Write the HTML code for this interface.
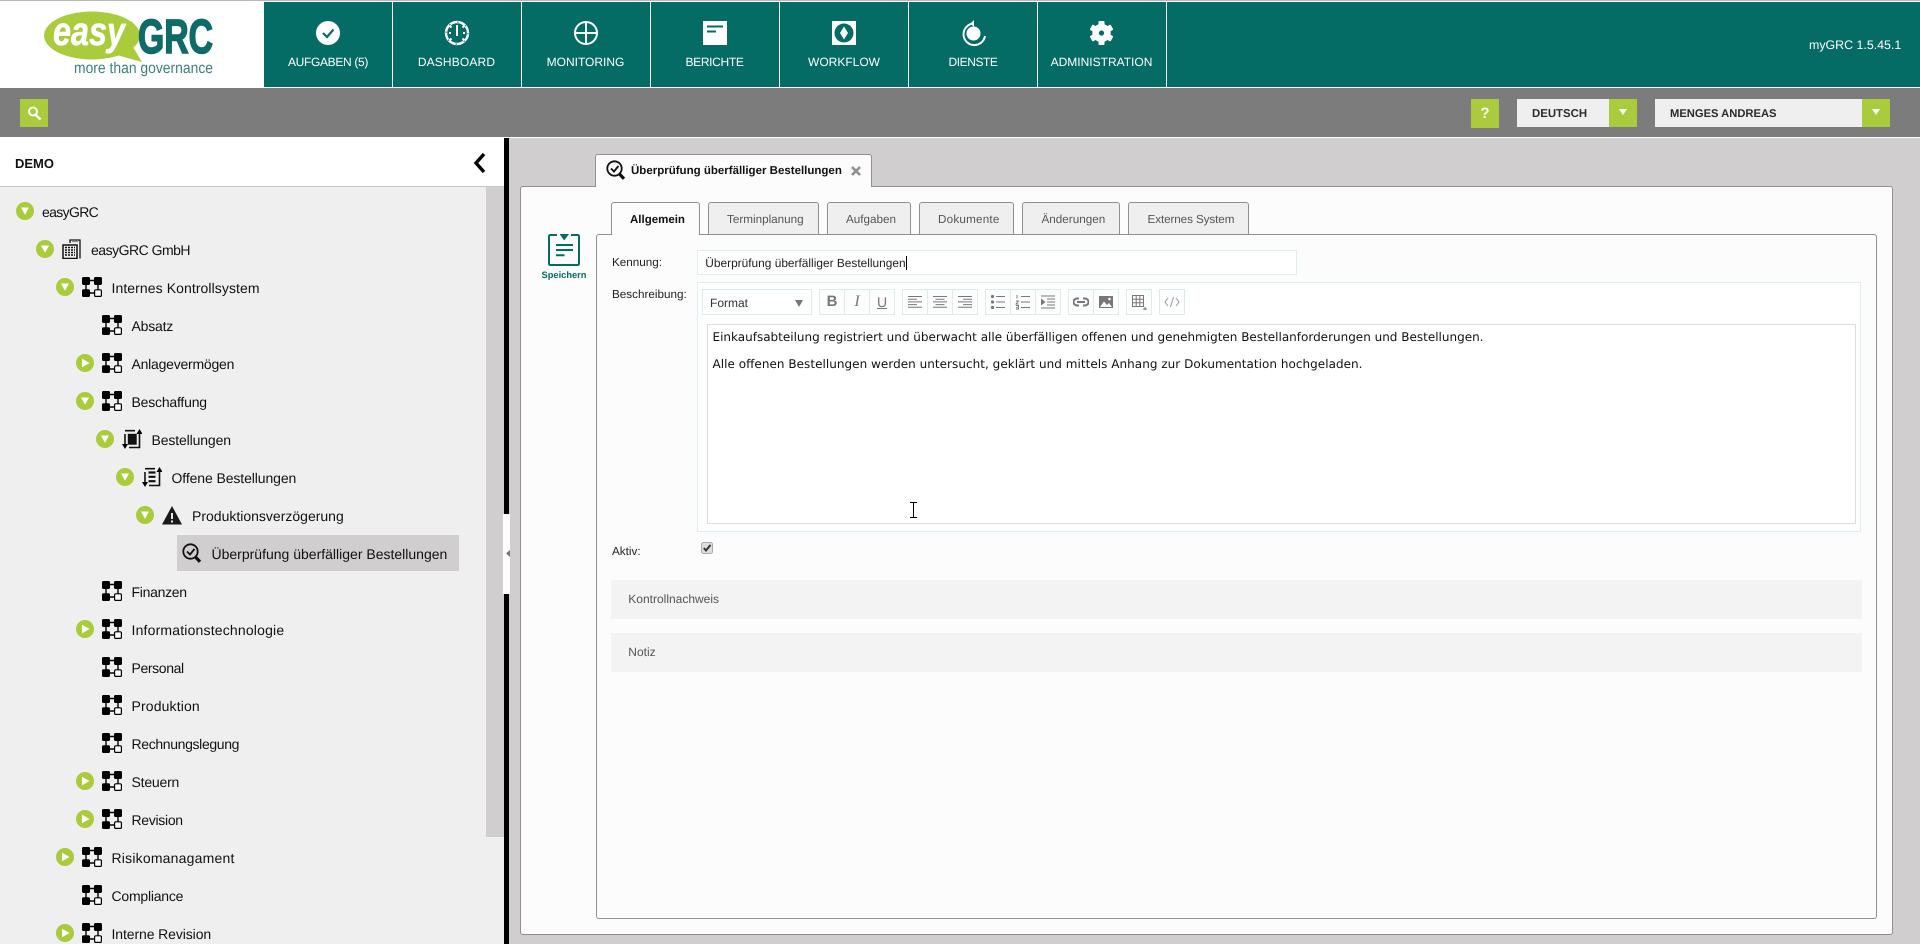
<!DOCTYPE html>
<html lang="de"><head><meta charset="utf-8"><title>myGRC</title>
<style>
html,body{margin:0;padding:0;width:1920px;height:944px;overflow:hidden;background:#d0cecf}
body{position:relative;font-family:"Liberation Sans",Arial,sans-serif;color:#111;text-rendering:geometricPrecision}
.a{position:absolute}
.t{position:absolute;white-space:nowrap;line-height:20px;height:20px}
.nav{position:absolute;top:2px;height:85px;background:#056b65}
.nt{position:absolute;top:52px;width:129px;text-align:center;color:#fff;font-size:12px;line-height:20px;white-space:nowrap}
.tree{font-size:14px;color:#111}
.tab{position:absolute;top:202px;height:32px;box-sizing:border-box;background:#efefef;border:1px solid #909090;border-bottom:0;border-radius:3px 3px 0 0}
.tt{font-size:11.7px;color:#555}
.btn{position:absolute;top:289px;width:26px;height:26px;box-sizing:border-box;border:1px solid #dcebeb;background:#fdfdfd;color:#777;text-align:center;font-size:13px;line-height:24px}
.btn svg{position:absolute;left:4px;top:4px;width:16px;height:16px}
.ic{position:absolute;width:20px;height:20px}
.tg{position:absolute;width:18px;height:18px}
svg{display:block}
</style></head><body>
<svg width="0" height="0" style="position:absolute">
<defs>
<symbol id="proc" viewBox="0 0 20 20"><path d="M4 3.500H16M4 6V14M16 6V14M6 16H13" stroke="#000" stroke-width="1.400" fill="none"/><rect x="0" y="0" width="8" height="8" rx="1.600"/><rect x="12" y="0" width="8" height="8" rx="1.600"/><rect x="0" y="12.200" width="8" height="7.800" rx="1.600"/><rect x="12.600" y="12.800" width="6.800" height="6.600" rx="1.200" fill="#fff" stroke="#000" stroke-width="1.200"/></symbol>
<symbol id="bld" viewBox="0 0 20 20"><path d="M8 4V1H18V19.500" fill="none" stroke="#111" stroke-width="1.300"/><rect x="1" y="6" width="14" height="13.500" fill="#efefef" stroke="#111" stroke-width="1.500"/><path d="M3 8.500H13M3 11H13M3 13.500H13M3 16H13" stroke="#111" stroke-width="1.500" stroke-dasharray="2 1"/><path d="M10.500 2.600H16" stroke="#111" stroke-dasharray="1 1"/></symbol>
<symbol id="best" viewBox="0 0 20 20"><path d="M3 5V18M17.500 2V18.500H7M3 1.700H13" fill="none" stroke="#111" stroke-width="1.600"/><path d="M0 15H6L3 20ZM14.500 5H20.500L17.500 0Z"/><rect x="6.500" y="5.500" width="7.500" height="9.500" stroke="#111" fill="#111" stroke-width="1.400"/></symbol>
<symbol id="best2" viewBox="0 0 20 20"><path d="M3 5V18M17.500 2V18.500H7M3 1.700H13" fill="none" stroke="#111" stroke-width="1.600"/><path d="M0 15H6L3 20ZM14.500 5H20.500L17.500 0Z"/><path d="M6.500 5.500H13.500M6.500 9.800H13.500M6.500 14.200H13.500" stroke="#111" stroke-width="2.200"/></symbol>
<symbol id="mag" viewBox="0 0 20 20"><circle cx="8.500" cy="8.500" r="7.200" fill="none" stroke="#111" stroke-width="1.800"/><path d="M5 8.500L8 11.500L12.500 6" fill="none" stroke="#111" stroke-width="1.800"/><path d="M13.500 14L18 18.800" stroke="#111" stroke-width="3.200"/></symbol>
<symbol id="dn" viewBox="0 0 18 18"><circle cx="9" cy="9" r="9" fill="#a9cb3c"/><path d="M5 5.500H13L9 12.800Z" fill="#fff"/></symbol>
<symbol id="rt" viewBox="0 0 18 18"><circle cx="9" cy="9" r="9" fill="#a9cb3c"/><path d="M6 4.800L13.600 9L6 13.200Z" fill="#fff"/></symbol>
</defs></svg>

<!-- header -->
<div class="a" style="left:0;top:0;width:1920px;height:1px;background:#b9b9b9"></div>
<div class="a" style="left:0;top:1px;width:1920px;height:1px;background:#fff"></div>
<div class="a" style="left:0;top:2px;width:264px;height:86px;background:#fff"></div>
<svg class="a" style="left:0;top:0" width="264" height="88" viewBox="0 0 264 88">
<ellipse cx="92" cy="35.500" rx="48" ry="24" fill="#a9cb3c"/><path d="M106 52L142 62L130 42Z" fill="#a9cb3c"/>
<text x="53" y="45" font-family="Liberation Sans" font-weight="700" font-style="italic" font-size="40" fill="#fff" stroke="#fff" stroke-width=".6" textLength="72" lengthAdjust="spacingAndGlyphs">easy</text>
<text x="138" y="53" font-family="Liberation Sans" font-weight="700" font-size="48" fill="#0f6b68" stroke="#0f6b68" stroke-width="1.600" textLength="75" lengthAdjust="spacingAndGlyphs">GRC</text>
<text x="74" y="73" font-family="Liberation Sans" font-size="15.500" fill="#3f7f80" textLength="139" lengthAdjust="spacingAndGlyphs">more than governance</text>
</svg>
<div class="nav" style="left:264px;width:1656px"></div>
<div class="a" style="left:264px;top:87px;width:1656px;height:1px;background:#fff"></div>
<div class="a" style="left:392px;top:2px;width:1px;height:85px;background:#fff"></div>
<div class="a" style="left:521px;top:2px;width:1px;height:85px;background:#fff"></div>
<div class="a" style="left:650px;top:2px;width:1px;height:85px;background:#fff"></div>
<div class="a" style="left:779px;top:2px;width:1px;height:85px;background:#fff"></div>
<div class="a" style="left:908px;top:2px;width:1px;height:85px;background:#fff"></div>
<div class="a" style="left:1037px;top:2px;width:1px;height:85px;background:#fff"></div>
<div class="a" style="left:1166px;top:2px;width:1px;height:85px;background:#fff"></div>
<svg class="a" style="left:264px;top:0" width="920" height="88" viewBox="264 0 920 88">
<circle cx="328" cy="33" r="12" fill="#fff"/><path d="M323 33L327 37L333.500 29.500" fill="none" stroke="#056b65" stroke-width="2.200"/>
<circle cx="457" cy="33" r="11" fill="none" stroke="#fff" stroke-width="2.400"/><circle cx="457" cy="33" r="11" fill="none" stroke="#056b65" stroke-width="1" stroke-dasharray="1.500 7.100"/><path d="M457 25V36M451 33H449M463 33H465M451.500 27.500L450 26M462.500 27.500L464 26M451.500 38.500L450 40M462.500 38.500L464 40" stroke="#fff" stroke-width="2"/>
<circle cx="586" cy="33" r="11" fill="none" stroke="#fff" stroke-width="2"/><path d="M586 22V44M575 33H597" stroke="#fff" stroke-width="2"/>
<rect x="703" y="21" width="24" height="24" fill="#fff"/><path d="M707 26.500H723M707 31.500H716" stroke="#056b65" stroke-width="2"/>
<rect x="832" y="21" width="24" height="24" fill="#fff"/><circle cx="844" cy="33" r="9.500" fill="#056b65"/><path d="M844 26.500L848 33L844 39.500L840 33Z" fill="#fff"/>
<circle cx="973.500" cy="33.500" r="7" fill="#fff"/><path d="M974 23.500A10.800 10.800 0 1 0 985 36" fill="none" stroke="#fff" stroke-width="2"/><path d="M974 20V27L970.500 23.500Z" fill="#fff"/>
<g fill="#fff" transform="translate(1101.500 33)"><circle r="9.200"/><rect x="-3" y="-12" width="6" height="24" rx="1"/><rect x="-3" y="-12" width="6" height="24" rx="1" transform="rotate(60)"/><rect x="-3" y="-12" width="6" height="24" rx="1" transform="rotate(120)"/></g><circle cx="1101.500" cy="33" r="2.600" fill="#056b65"/>
</svg>
<div class="nt" style="left:263.500px;letter-spacing:-.33px">AUFGABEN (5)</div>
<div class="nt" style="left:392px;letter-spacing:.15px">DASHBOARD</div>
<div class="nt" style="left:521px">MONITORING</div>
<div class="nt" style="left:650px;letter-spacing:-.33px">BERICHTE</div>
<div class="nt" style="left:779.500px">WORKFLOW</div>
<div class="nt" style="left:908.500px;letter-spacing:-.43px">DIENSTE</div>
<div class="nt" style="left:1037px">ADMINISTRATION</div>
<div class="t" style="left:1809px;top:35px;font-size:12.400px;color:#fff">myGRC 1.5.45.1</div>

<!-- gray bar -->
<div class="a" style="left:0;top:88px;width:1920px;height:49px;background:#7c7c7c"></div>
<div class="a" style="left:0;top:137px;width:1920px;height:1px;background:#fff"></div>
<div class="a" style="left:20px;top:99px;width:28px;height:28px;background:#a9cb3c"></div>
<svg class="a" style="left:20px;top:99px" width="28" height="28"><circle cx="13" cy="12.500" r="4" fill="none" stroke="#fff" stroke-width="2"/><path d="M16 16L20.500 20.500" stroke="#fff" stroke-width="2.400"/></svg>
<div class="a" style="left:1471px;top:99px;width:28px;height:29px;background:#a9cb3c;color:#fff;font-weight:700;font-size:15px;line-height:29px;text-align:center">?</div>
<div class="a" style="left:1517px;top:99px;width:92px;height:28px;background:#efefef"></div>
<div class="a" style="left:1609px;top:99px;width:28px;height:28px;background:#a9cb3c"></div>
<div class="a" style="left:1655px;top:99px;width:207px;height:28px;background:#efefef"></div>
<div class="a" style="left:1862px;top:99px;width:28px;height:28px;background:#a9cb3c"></div>
<svg class="a" style="left:1609px;top:99px" width="281" height="28"><path d="M10 10H18L14 16Z" fill="#fff"/><path d="M263 10H271L267 16Z" fill="#fff"/></svg>
<div class="t" style="left:1532px;top:104px;font-size:11.400px;font-weight:700;color:#2b2b2b">DEUTSCH</div>
<div class="t" style="left:1670px;top:104px;font-size:11.200px;font-weight:700;color:#2b2b2b">MENGES ANDREAS</div>

<!-- sidebar -->
<div class="a" style="left:0;top:138px;width:504px;height:48px;background:#fff"></div>
<div class="a" style="left:0;top:186px;width:504px;height:1px;background:#c6c6c6"></div>
<div class="a" style="left:0;top:187px;width:504px;height:757px;background:#efefef"></div>
<div class="a" style="left:486px;top:187px;width:18px;height:650px;background:#d0cecf"></div>
<div class="a" style="left:504px;top:138px;width:5px;height:806px;background:#000"></div>
<div class="a" style="left:503px;top:514px;width:7px;height:80px;background:#fff"></div>
<svg class="a" style="left:506px;top:550px" width="5" height="7"><path d="M4 0V7L0 3.500Z" fill="#777"/></svg>
<div class="t" style="left:15px;top:154px;font-size:13px;font-weight:700">DEMO</div>
<svg class="a" style="left:472px;top:152px" width="15" height="22"><path d="M12 2L4 11L12 20" fill="none" stroke="#000" stroke-width="3.400"/></svg>

<svg class="tg" style="left:16px;top:202px"><use href="#dn"/></svg>
<div class="t tree" style="left:42px;top:202px;letter-spacing:-.65px">easyGRC</div>

<svg class="tg" style="left:36px;top:240px"><use href="#dn"/></svg>
<svg class="ic" style="left:62px;top:239px"><use href="#bld"/></svg>
<div class="t tree" style="left:91px;top:240px;letter-spacing:-.5px">easyGRC GmbH</div>

<svg class="tg" style="left:56px;top:278px"><use href="#dn"/></svg>
<svg class="ic" style="left:82px;top:277px"><use href="#proc"/></svg>
<div class="t tree" style="left:111.500px;top:278px;letter-spacing:.08px">Internes Kontrollsystem</div>

<svg class="ic" style="left:102px;top:315px"><use href="#proc"/></svg>
<div class="t tree" style="left:131.500px;top:316px;letter-spacing:-.2px">Absatz</div>

<svg class="tg" style="left:76px;top:354px"><use href="#rt"/></svg>
<svg class="ic" style="left:102px;top:353px"><use href="#proc"/></svg>
<div class="t tree" style="left:131.500px;top:354px;letter-spacing:-.23px">Anlagevermögen</div>

<svg class="tg" style="left:76px;top:392px"><use href="#dn"/></svg>
<svg class="ic" style="left:102px;top:391px"><use href="#proc"/></svg>
<div class="t tree" style="left:131.500px;top:392px;letter-spacing:-.2px">Beschaffung</div>

<svg class="tg" style="left:96px;top:430px"><use href="#dn"/></svg>
<svg class="ic" style="left:122px;top:429px"><use href="#best"/></svg>
<div class="t tree" style="left:151.500px;top:430px;letter-spacing:-.13px">Bestellungen</div>

<svg class="tg" style="left:116px;top:468px"><use href="#dn"/></svg>
<svg class="ic" style="left:142px;top:467px"><use href="#best2"/></svg>
<div class="t tree" style="left:171.500px;top:468px;letter-spacing:-.1px">Offene Bestellungen</div>

<svg class="tg" style="left:136px;top:506px"><use href="#dn"/></svg>
<svg class="ic" style="left:162px;top:506px" viewBox="0 0 20 20"><path d="M10 0L20 18.500H0Z" fill="#1a1a1a"/><path d="M10 7V13M10 14.500V16.500" stroke="#fff" stroke-width="1.800"/></svg>
<div class="t tree" style="left:192px;top:506px">Produktionsverzögerung</div>

<div class="a" style="left:177px;top:535px;width:282px;height:36px;background:#d0cecf"></div>
<svg class="ic" style="left:182px;top:543px"><use href="#mag"/></svg>
<div class="t tree" style="left:211.500px;top:544px">Überprüfung überfälliger Bestellungen</div>

<svg class="ic" style="left:102px;top:581px"><use href="#proc"/></svg>
<div class="t tree" style="left:131.500px;top:582px;letter-spacing:-.29px">Finanzen</div>

<svg class="tg" style="left:76px;top:620px"><use href="#rt"/></svg>
<svg class="ic" style="left:102px;top:619px"><use href="#proc"/></svg>
<div class="t tree" style="left:131.500px;top:620px;letter-spacing:.18px">Informationstechnologie</div>

<svg class="ic" style="left:102px;top:657px"><use href="#proc"/></svg>
<div class="t tree" style="left:131.500px;top:658px;letter-spacing:-.37px">Personal</div>

<svg class="ic" style="left:102px;top:695px"><use href="#proc"/></svg>
<div class="t tree" style="left:131.500px;top:696px;letter-spacing:.14px">Produktion</div>

<svg class="ic" style="left:102px;top:733px"><use href="#proc"/></svg>
<div class="t tree" style="left:131.500px;top:734px;letter-spacing:-.35px">Rechnungslegung</div>

<svg class="tg" style="left:76px;top:772px"><use href="#rt"/></svg>
<svg class="ic" style="left:102px;top:771px"><use href="#proc"/></svg>
<div class="t tree" style="left:131.500px;top:772px;letter-spacing:-.2px">Steuern</div>

<svg class="tg" style="left:76px;top:810px"><use href="#rt"/></svg>
<svg class="ic" style="left:102px;top:809px"><use href="#proc"/></svg>
<div class="t tree" style="left:131.500px;top:810px;letter-spacing:-.3px">Revision</div>

<svg class="tg" style="left:56px;top:848px"><use href="#rt"/></svg>
<svg class="ic" style="left:82px;top:847px"><use href="#proc"/></svg>
<div class="t tree" style="left:111.500px;top:848px;letter-spacing:.2px">Risikomanagament</div>

<svg class="ic" style="left:82px;top:885px"><use href="#proc"/></svg>
<div class="t tree" style="left:111.500px;top:886px;letter-spacing:-.22px">Compliance</div>

<svg class="tg" style="left:56px;top:924px"><use href="#rt"/></svg>
<svg class="ic" style="left:82px;top:923px"><use href="#proc"/></svg>
<div class="t tree" style="left:111.500px;top:924px;letter-spacing:-.1px">Interne Revision</div>

<!-- main panel -->
<div class="a" style="left:520px;top:186px;width:1373px;height:749px;box-sizing:border-box;background:#fcfcfc;border:1px solid #909090;border-radius:3px"></div>
<div class="a" style="left:595px;top:154px;width:277px;height:33px;box-sizing:border-box;background:#fcfcfc;border:1px solid #909090;border-bottom:0;border-radius:3px 3px 0 0"></div>
<svg class="ic" style="left:606px;top:160px"><use href="#mag"/></svg>
<div class="t" style="left:631px;top:161px;font-size:11.500px;font-weight:700">Überprüfung überfälliger Bestellungen</div>
<svg class="a" style="left:851px;top:166px" width="10" height="10"><path d="M1 1L9 9M9 1L1 9" stroke="#909090" stroke-width="2.600"/></svg>

<!-- save -->
<svg class="a" style="left:548px;top:234px" width="32" height="32"><path d="M9 1H2.500Q1 1 1 2.500V29.500Q1 31 2.500 31H29.500Q31 31 31 29.500V2.500Q31 1 29.500 1H23" fill="none" stroke="#056b65" stroke-width="2"/><path d="M11.500 0H21L16.200 6.500Z" fill="#056b65"/><path d="M8 11H25M8 16H25M8 21.300H16.500" stroke="#056b65" stroke-width="2"/></svg>
<div class="t" style="left:541px;top:265px;width:46px;text-align:center;font-size:9.300px;font-weight:700;color:#056b65">Speichern</div>

<!-- inner panel -->
<div class="a" style="left:596px;top:234px;width:1281px;height:685px;box-sizing:border-box;background:#fcfcfc;border:1px solid #909090;border-radius:3px"></div>
<div class="a" style="left:611px;top:202px;width:89px;height:33px;box-sizing:border-box;background:#fcfcfc;border:1px solid #909090;border-bottom:0;border-radius:3px 3px 0 0"></div>
<div class="t" style="left:630px;top:210px;font-size:11.500px;font-weight:700">Allgemein</div>
<div class="tab" style="left:708px;width:111px"></div><div class="t tt" style="left:727px;top:210px">Terminplanung</div>
<div class="tab" style="left:827px;width:84px"></div><div class="t tt" style="left:846px;top:210px">Aufgaben</div>
<div class="tab" style="left:919px;width:95px"></div><div class="t tt" style="left:938px;top:210px;letter-spacing:.2px">Dokumente</div>
<div class="tab" style="left:1022px;width:98px"></div><div class="t tt" style="left:1041.500px;top:210px">Änderungen</div>
<div class="tab" style="left:1128px;width:121px"></div><div class="t tt" style="left:1147.500px;top:210px;letter-spacing:-.1px">Externes System</div>

<div class="t" style="left:612px;top:253px;font-size:11.700px;color:#222">Kennung:</div>
<div class="t" style="left:612px;top:285px;font-size:11.700px;color:#222">Beschreibung:</div>
<div class="t" style="left:612px;top:542px;font-size:11.700px;color:#222">Aktiv:</div>

<div class="a" style="left:697px;top:250px;width:600px;height:25px;box-sizing:border-box;background:#fff;border:1px solid #dfeeee"></div>
<div class="t" style="left:705.300px;top:253px;font-size:11.900px;color:#222">Überprüfung überfälliger Bestellungen</div>
<div class="a" style="left:906px;top:256px;width:1px;height:14px;background:#000"></div>

<div class="a" style="left:697px;top:282px;width:1164px;height:250px;box-sizing:border-box;background:#fff;border:1px solid #dfeeee"></div>
<div class="a" style="left:702px;top:289px;width:110px;height:26px;box-sizing:border-box;background:#fff;border:1px solid #dcebeb"></div>
<div class="t" style="left:710px;top:293px;font-size:12px;color:#333">Format</div>
<svg class="a" style="left:795px;top:300px" width="8" height="7"><path d="M0 0H8L4 7Z" fill="#777"/></svg>

<div class="btn" style="left:819px;font-weight:700;font-size:15px">B</div>
<div class="btn" style="left:844px;font-family:'Liberation Serif',serif;font-style:italic;font-size:16px">I</div>
<div class="btn" style="left:869px;font-size:14px;text-decoration:underline">U</div>
<div class="btn" style="left:902px"><svg viewBox="0 0 16 16"><path d="M1 2.500H15M1 5.200H10M1 7.900H15M1 10.600H10M1 13.300H15" stroke="#777"/></svg></div>
<div class="btn" style="left:927px"><svg viewBox="0 0 16 16"><path d="M1 2.500H15M3.500 5.200H12.500M1 7.900H15M3.500 10.600H12.500M1 13.300H15" stroke="#777"/></svg></div>
<div class="btn" style="left:952px"><svg viewBox="0 0 16 16"><path d="M1 2.500H15M6 5.200H15M1 7.900H15M6 10.600H15M1 13.300H15" stroke="#777"/></svg></div>
<div class="btn" style="left:985px"><svg viewBox="0 0 16 16"><circle cx="2.500" cy="2.500" r="1.600" fill="#777"/><circle cx="2.500" cy="8" r="1.600" fill="#777"/><circle cx="2.500" cy="13.500" r="1.600" fill="#777"/><path d="M6 2.500H15M6 8H15M6 13.500H15" stroke="#777"/></svg></div>
<div class="btn" style="left:1010px"><svg viewBox="0 0 16 16"><path d="M2 1V4.500M1 7H3.500L1 10H3.500M1 11.500H3.500V15H1M1 13.300H3" stroke="#777" fill="none" stroke-width=".9"/><path d="M6 2.500H15M6 8H15M6 13.500H15" stroke="#777"/></svg></div>
<div class="btn" style="left:1035px"><svg viewBox="0 0 16 16"><path d="M1 2H15M7 5H15M7 8H15M7 11H15M1 14H15" stroke="#777"/><path d="M1 4.500L5.500 8L1 11.500Z" fill="#777"/></svg></div>
<div class="btn" style="left:1068px"><svg viewBox="0 0 16 16"><path d="M6 4.500H4A3.500 3.500 0 0 0 4 11.500H6M10 4.500H12A3.500 3.500 0 0 1 12 11.500H10M4 8H12" fill="none" stroke="#777" stroke-width="2"/></svg></div>
<div class="btn" style="left:1093px"><svg viewBox="0 0 16 16"><rect x="1" y="2" width="14" height="12" fill="#777"/><path d="M2 13L6 7.500L9 11L11 9L14 13Z" fill="#fff"/><circle cx="11.500" cy="5" r="1.300" fill="#fff"/></svg></div>
<div class="btn" style="left:1126px"><svg viewBox="0 0 16 16"><path d="M1.500 1.500H12.500V12.500H1.500ZM1.500 5.200H12.500M1.500 8.800H12.500M5.200 1.500V12.500M8.800 1.500V12.500" fill="none" stroke="#777"/><path d="M12 15H16M14 13V17" stroke="#777"/></svg></div>
<div class="btn" style="left:1159px"><svg viewBox="0 0 16 16"><path d="M4 4L1 8L4 12M12 4L15 8L12 12M9.500 3L6.500 13" fill="none" stroke="#999"/></svg></div>

<div class="a" style="left:707px;top:324px;width:1149px;height:200px;box-sizing:border-box;background:#fff;border:1px solid #dcdcdc"></div>
<svg class="a" style="left:707px;top:324px" width="1149" height="60" viewBox="707 324 1149 60" font-family="DejaVu Sans" font-size="12" fill="#111">
<text x="712.500" y="341" textLength="771" lengthAdjust="spacing">Einkaufsabteilung registriert und überwacht alle überfälligen offenen und genehmigten Bestellanforderungen und Bestellungen.</text>
<text x="712.500" y="368" textLength="650" lengthAdjust="spacing">Alle offenen Bestellungen werden untersucht, geklärt und mittels Anhang zur Dokumentation hochgeladen.</text>
</svg>
<svg class="a" style="left:909px;top:502px" width="9" height="16"><path d="M1 .5H4.500M4.500 .5H8M4.500 .5V15.500M1 15.500H8" fill="none" stroke="#000"/></svg>

<svg class="a" style="left:701px;top:542px" width="12" height="12"><rect x=".5" y=".5" width="11" height="11" rx="2" fill="#ddd" stroke="#aaa"/><path d="M2.800 6L5 8.500L9.500 3" fill="none" stroke="#333" stroke-width="2"/></svg>

<div class="a" style="left:611px;top:580px;width:1251px;height:39px;background:#f3f3f3"></div>
<div class="t" style="left:628.300px;top:589px;font-size:12px;color:#555">Kontrollnachweis</div>
<div class="a" style="left:611px;top:633px;width:1251px;height:39px;background:#f3f3f3"></div>
<div class="t" style="left:628.300px;top:642px;font-size:12px;color:#555">Notiz</div>
</body></html>
